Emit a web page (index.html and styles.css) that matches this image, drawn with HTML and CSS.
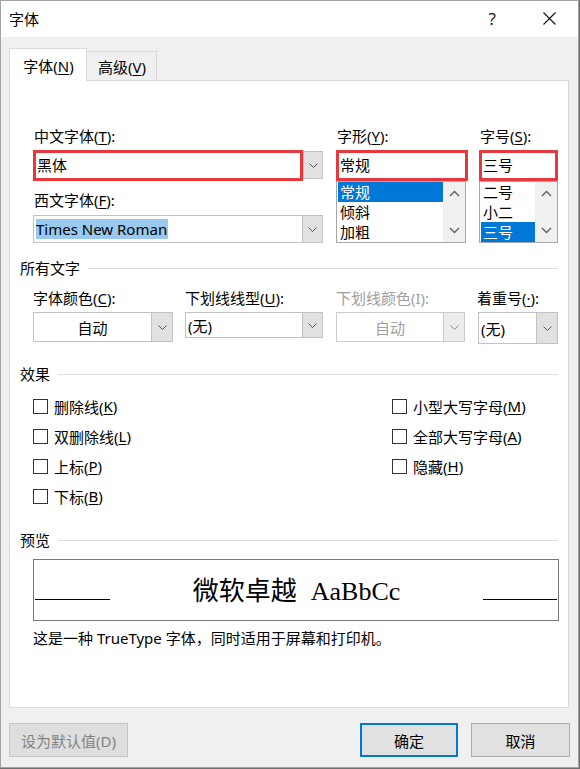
FILE: index.html
```html
<!DOCTYPE html>
<html lang="zh-CN">
<head>
<meta charset="utf-8">
<title>字体</title>
<link rel="stylesheet" href="styles.css">
</head>
<body>
<div class="window">
  <div class="titlebar">
    <span class="title">字体</span>
    <span class="help">?</span>
    <span class="close"><svg width="13" height="13" viewBox="0 0 13 13"><path d="M.5.5l12 12M12.5.5l-12 12" stroke="#111" stroke-width="1.1" fill="none"/></svg></span>
  </div>
  <div class="tabs">
    <div class="tab active">字体(<u>N</u>)</div>
    <div class="tab">高级(<u>V</u>)</div>
  </div>
  <div class="panel">
    <div class="fontrow">
      <div class="col col-cn">
        <div class="label">中文字体(<u>T</u>):</div>
        <div class="combo-row">
          <div class="marked edit-cn">黑体</div>
          <div class="drop drop-solo"><svg width="9" height="5" viewBox="0 0 9 5"><path d="M.5.5l4 4 4-4" fill="none" stroke="#555"/></svg></div>
        </div>
        <div class="label label-west">西文字体(<u>F</u>):</div>
        <div class="combo combo-west">
          <div class="edit"><span class="sel">Times New Roman</span></div>
          <div class="drop"><svg width="9" height="5" viewBox="0 0 9 5"><path d="M.5.5l4 4 4-4" fill="none" stroke="#555"/></svg></div>
        </div>
      </div>
      <div class="col col-style">
        <div class="label">字形(<u>Y</u>):</div>
        <div class="marked field">常规</div>
        <div class="list list-style">
          <div class="items">
            <div class="item selected">常规</div>
            <div class="item">倾斜</div>
            <div class="item">加粗</div>
          </div>
          <div class="scrollbar">
            <svg width="11" height="7" viewBox="0 0 11 7"><path d="M1 6l4.5-4.5L10 6" stroke="#606060" stroke-width="1.4" fill="none"/></svg>
            <svg width="11" height="7" viewBox="0 0 11 7"><path d="M1 1l4.5 4.5L10 1" stroke="#606060" stroke-width="1.4" fill="none"/></svg>
          </div>
        </div>
      </div>
      <div class="col col-size">
        <div class="label">字号(<u>S</u>):</div>
        <div class="marked field">三号</div>
        <div class="list list-size">
          <div class="items">
            <div class="item">二号</div>
            <div class="item">小二</div>
            <div class="item selected">三号</div>
          </div>
          <div class="scrollbar">
            <svg width="11" height="7" viewBox="0 0 11 7"><path d="M1 6l4.5-4.5L10 6" stroke="#606060" stroke-width="1.4" fill="none"/></svg>
            <svg width="11" height="7" viewBox="0 0 11 7"><path d="M1 1l4.5 4.5L10 1" stroke="#606060" stroke-width="1.4" fill="none"/></svg>
          </div>
        </div>
      </div>
    </div>

    <div class="section sec-all"><span>所有文字</span><i class="rule"></i></div>
    <div class="attr-labels">
      <div class="lbl w1">字体颜色(<u>C</u>):</div>
      <div class="lbl w2">下划线线型(<u>U</u>):</div>
      <div class="lbl w3 disabled">下划线颜色(I):</div>
      <div class="lbl w4">着重号(<u>·</u>):</div>
    </div>
    <div class="attr-combos">
      <div class="combo w1 h30">
        <div class="edit center">自动</div>
        <div class="drop"><svg width="9" height="5" viewBox="0 0 9 5"><path d="M.5.5l4 4 4-4" fill="none" stroke="#555"/></svg></div>
      </div>
      <div class="combo w2 h26">
        <div class="edit">(无)</div>
        <div class="drop"><svg width="9" height="5" viewBox="0 0 9 5"><path d="M.5.5l4 4 4-4" fill="none" stroke="#555"/></svg></div>
      </div>
      <div class="combo w3 h30 combo-disabled">
        <div class="edit center">自动</div>
        <div class="drop"><svg width="9" height="5" viewBox="0 0 9 5"><path d="M.5.5l4 4 4-4" fill="none" stroke="#8a8a8a"/></svg></div>
      </div>
      <div class="combo w4 h32">
        <div class="edit">(无)</div>
        <div class="drop"><svg width="9" height="5" viewBox="0 0 9 5"><path d="M.5.5l4 4 4-4" fill="none" stroke="#555"/></svg></div>
      </div>
    </div>

    <div class="section sec-fx"><span>效果</span><i class="rule"></i></div>
    <div class="effects">
      <label class="check"><span class="box"></span>删除线(<u>K</u>)</label>
      <label class="check"><span class="box"></span>小型大写字母(<u>M</u>)</label>
      <label class="check"><span class="box"></span>双删除线(<u>L</u>)</label>
      <label class="check"><span class="box"></span>全部大写字母(<u>A</u>)</label>
      <label class="check"><span class="box"></span>上标(<u>P</u>)</label>
      <label class="check"><span class="box"></span>隐藏(<u>H</u>)</label>
      <label class="check"><span class="box"></span>下标(<u>B</u>)</label>
    </div>

    <div class="section sec-pv"><span>预览</span><i class="rule"></i></div>
    <div class="preview">
      <i class="pline pline-l"></i>
      <div class="sample"><span class="cjk">微软卓越</span><span class="latin">AaBbCc</span></div>
      <i class="pline pline-r"></i>
    </div>
    <div class="caption">这是一种 TrueType 字体，同时适用于屏幕和打印机。</div>
  </div>

  <div class="buttons">
    <div class="btn btn-default">设为默认值(D)</div>
    <div class="btn btn-ok">确定</div>
    <div class="btn btn-cancel">取消</div>
  </div>
</div>
</body>
</html>
```

FILE: styles.css
```css
* { box-sizing: border-box; }

html, body {
  margin: 0;
  padding: 0;
}

body {
  width: 580px;
  height: 769px;
  overflow: hidden;
  background: #6e6e6e;
  font-family: "Noto Sans", "Noto Sans CJK SC", sans-serif;
  font-size: 15px;
  color: #000;
}

u { text-decoration: underline; text-underline-offset: 2px; }

.window {
  width: 579px;
  height: 768px;
  background: #f0f0f0;
  border: 1px solid #a3a3a3;
  display: flex;
  flex-direction: column;
}

/* title bar */
.titlebar {
  height: 36px;
  background: #fff;
  display: flex;
  align-items: center;
  padding-left: 8px;
}
.title {
  flex: 1;
  line-height: 20px;
  margin-top: -1px;
}
.help {
  font-size: 17px;
  line-height: 20px;
  margin-right: 47px;
  color: #222;
}
.close {
  display: flex;
  margin-right: 22px;
  margin-top: -1px;
}

/* tabs */
.tabs {
  display: flex;
  align-items: flex-end;
  margin-top: 11px;
  padding-left: 8px;
  height: 32px;
  position: relative;
  z-index: 1;
}
.tab {
  height: 29px;
  width: 71px;
  margin-left: -1px;
  border: 1px solid #d9d9d9;
  border-bottom: none;
  background: #f0f0f0;
  text-align: center;
  line-height: 30px;
  padding-left: 1px;
}
.tab.active {
  margin-left: 0;
  width: 78px;
  height: 33px;
  margin-bottom: -1px;
  background: #fff;
  line-height: 34px;
  position: relative;
  z-index: 2;
}

/* panel */
.panel {
  margin-left: 8px;
  width: 560px;
  height: 628px;
  background: #fff;
  border: 1px solid #d9d9d9;
  padding: 45px 10px 0 10px;
}

.fontrow {
  display: flex;
  margin-left: 13px;
}
.col { display: flex; flex-direction: column; }
.col-cn { width: 290px; }
.col-style { width: 132px; margin-left: 13px; }
.col-size { width: 79px; margin-left: 11px; }

.label {
  height: 20px;
  line-height: 20px;
  margin-bottom: 4px;
  padding-left: 1px;
  white-space: nowrap;
}
.label-west { margin-top: 9px; margin-bottom: 5px; }

.marked {
  border: 3px solid #e5393e;
  height: 31px;
  line-height: 24px;
  padding-left: 1px;
  background: #fff;
}

.combo-row { display: flex; align-items: flex-start; }
.edit-cn { flex: 1; }
.drop-solo {
  width: 20px;
  height: 28px;
  border: 1px solid #c2c2c2;
  border-left: none;
  margin-top: 1px;
}

.combo {
  display: flex;
  border: 1px solid #c2c2c2;
  background: #fff;
}
.combo-west { height: 28px; }
.combo .edit {
  flex: 1;
  display: flex;
  align-items: center;
  padding-left: 2px;
  white-space: nowrap;
}
.combo .edit.center { justify-content: center; padding-left: 0; }
.sel {
  background: #99c9ef;
  line-height: 20px;
  padding-right: 1px;
}

.drop {
  width: 20px;
  background: #e1e1e1;
  border-left: 1px solid #c2c2c2;
  display: flex;
  align-items: center;
  justify-content: center;
}

/* list boxes */
.list {
  display: flex;
  height: 62px;
  border: 1px solid #a7a7a7;
  background: #fff;
}
.list-style { width: 130px; }
.list-size { width: 79px; }
.items { flex: 1; padding-left: 1px; }
.item {
  height: 20px;
  line-height: 20px;
  padding-left: 2px;
}
.item.selected { background: #0078d7; color: #fff; }
.scrollbar {
  width: 22px;
  background: #f0f0f0;
  display: flex;
  flex-direction: column;
  align-items: center;
  justify-content: space-between;
  padding: 8px 0 8px;
}

/* section headers */
.section {
  display: flex;
  align-items: center;
  height: 20px;
  line-height: 20px;
}
.section .rule {
  flex: 1;
  height: 1px;
  background: #dcdcdc;
  margin-left: 8px;
}
.sec-all { margin-top: 15px; }
.sec-fx { margin-top: 20px; }
.sec-pv { margin-top: 19px; }

/* attribute row */
.attr-labels, .attr-combos {
  display: flex;
  margin-left: 13px;
}
.attr-labels { margin-top: 10px; }
.attr-combos { margin-top: 4px; height: 32px; align-items: flex-start; }
.lbl { height: 20px; line-height: 20px; white-space: nowrap; }
.w1 { width: 140px; }
.w2 { width: 138px; margin-left: 12px; }
.w3 { width: 129px; margin-left: 13px; }
.w4 { width: 80px; margin-left: 13px; }
.attr-labels .w4 { margin-left: 12px; }
.h26 { height: 26px; }
.h30 { height: 30px; }
.h32 { height: 32px; }
.w1 .drop, .w3 .drop, .w4 .drop { width: 21px; }
.disabled { color: #a0a0a0; }
.combo-disabled { border-color: #cccccc; color: #a0a0a0; }
.combo-disabled .drop { background: #ececec; border-left-color: #cccccc; }

/* effects */
.effects {
  display: grid;
  grid-template-columns: 359px auto;
  grid-auto-rows: 30px;
  margin-top: 7px;
  margin-left: 13px;
}
.check {
  display: flex;
  align-items: center;
  white-space: nowrap;
}
.box {
  width: 15px;
  height: 15px;
  border: 1px solid #333;
  background: #fff;
  margin-right: 6px;
}

/* preview */
.preview {
  margin-top: 9px;
  margin-left: 13px;
  width: 526px;
  height: 62px;
  border: 1px solid #777;
  display: flex;
  align-items: center;
}
.pline {
  display: block;
  height: 1px;
  background: #000;
  align-self: flex-end;
  margin-bottom: 20px;
}
.pline-l { width: 75px; margin-left: 1px; }
.pline-r { width: 74px; margin-right: 1px; }
.sample {
  flex: 1;
  text-align: center;
  font-size: 26px;
  line-height: 32px;
  white-space: nowrap;
}
.sample .cjk { font-family: "Noto Sans CJK SC", sans-serif; }
.sample .latin {
  font-family: "Liberation Serif", serif;
  margin-left: 14px;
}
.caption {
  margin-top: 7px;
  margin-left: 13px;
  height: 20px;
  line-height: 20px;
  white-space: nowrap;
}

/* buttons */
.buttons {
  display: flex;
  margin-top: 15px;
  padding-left: 8px;
}
.btn {
  height: 34px;
  background: #e1e1e1;
  border: 1px solid #adadad;
  display: flex;
  align-items: center;
  justify-content: center;
}
.btn-default {
  width: 119px;
  background: #dedede;
  border-color: #c4c4c4;
  color: #838383;
}
.btn-ok {
  width: 98px;
  margin-left: auto;
  border: 2px solid #0078d7;
}
.btn-cancel {
  width: 99px;
  margin-left: 13px;
  margin-right: 8px;
}
```
